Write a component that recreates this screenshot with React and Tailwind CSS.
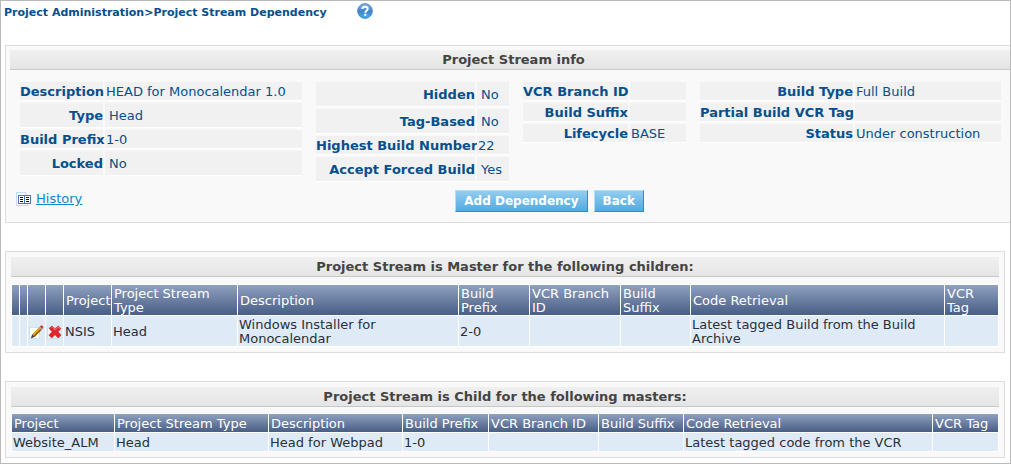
import React from "react";

const infoGroups = [
  {
    columns: "grid-cols-[84px_1fr]",
    items: [
      { label: "Description", value: "HEAD for Monocalendar 1.0" },
      { label: "Type", value: "Head", tall: true },
      { label: "Build Prefix", value: "1-0" },
      { label: "Locked", value: "No", tall: true },
    ],
  },
  {
    columns: "grid-cols-[160px_1fr]",
    items: [
      { label: "Hidden", value: "No", tall: true },
      { label: "Tag-Based", value: "No", tall: true },
      { label: "Highest Build Number", value: "22" },
      { label: "Accept Forced Build", value: "Yes", tall: true },
    ],
  },
  {
    columns: "grid-cols-[106px_1fr]",
    items: [
      { label: "VCR Branch ID", value: "" },
      { label: "Build Suffix", value: "" },
      { label: "Lifecycle", value: "BASE" },
    ],
  },
  {
    columns: "grid-cols-[154px_1fr]",
    items: [
      { label: "Build Type", value: "Full Build" },
      { label: "Partial Build VCR Tag", value: "" },
      { label: "Status", value: "Under construction" },
    ],
  },
];

const childColumns = [
  { label: "", width: "w-[7px]" },
  { label: "", width: "w-[7px]" },
  { label: "", width: "w-[17px]" },
  { label: "", width: "w-[17px]" },
  { label: "Project", width: "w-[47px]" },
  { label: "Project Stream Type", width: "w-[125px]" },
  { label: "Description", width: "w-[220px]" },
  { label: "Build Prefix", width: "w-[70px]" },
  { label: "VCR Branch ID", width: "w-[90px]" },
  { label: "Build Suffix", width: "w-[69px]" },
  { label: "Code Retrieval", width: "w-[253px]" },
  { label: "VCR Tag", width: "w-[53px]" },
];

const masterColumns = [
  { label: "Project", width: "w-[102px]" },
  { label: "Project Stream Type", width: "w-[153px]" },
  { label: "Description", width: "w-[133px]" },
  { label: "Build Prefix", width: "w-[85px]" },
  { label: "VCR Branch ID", width: "w-[109px]" },
  { label: "Build Suffix", width: "w-[84px]" },
  { label: "Code Retrieval", width: "w-[248px]" },
  { label: "VCR Tag", width: "w-[65px]" },
];

function HelpIcon() {
  return (
    <svg width="16" height="16" viewBox="0 0 16 16" aria-hidden="true">
      <defs>
        <linearGradient id="help" x1="0" y1="0" x2="0" y2="1">
          <stop offset="0" stopColor="#8fb4e3" />
          <stop offset="0.5" stopColor="#3f83c9" />
          <stop offset="1" stopColor="#45b4ea" />
        </linearGradient>
      </defs>
      <circle cx="8" cy="8" r="7.4" fill="url(#help)" stroke="#3f7dbd" strokeWidth="0.8" />
      <path
        d="M5.4 6.1C5.4 4.6 6.5 3.8 8 3.8s2.7.8 2.7 2.2c0 1.7-2.4 1.9-2.4 3.7"
        fill="none"
        stroke="#fff"
        strokeWidth="2"
      />
      <rect x="7.2" y="10.8" width="2.2" height="2" fill="#fff" />
    </svg>
  );
}

function HistoryIcon() {
  return (
    <svg width="16" height="15" viewBox="0 0 16 15" shapeRendering="crispEdges" aria-hidden="true">
      <path d="M0.5 0.5h8l3 3v10h-11z" fill="#fff" stroke="#c6def2" />
      <path d="M9 0v3h3" fill="none" stroke="#c6def2" />
      <rect x="2.5" y="3.5" width="12" height="8" fill="#fff" stroke="#4a76bd" />
      <path d="M8.5 3v9" stroke="#4a76bd" />
      <path d="M4 5.5h3M4 7.5h3M4 9.5h3M10 5.5h3M10 7.5h3M10 9.5h3" stroke="#111" />
    </svg>
  );
}

function EditIcon() {
  return (
    <svg width="15" height="15" viewBox="0 0 15 15" aria-hidden="true">
      <path d="M0.5 2.5h10v11h-10z" fill="#fff" stroke="#c6e2f3" />
      <path d="M3.2 9.2L10.4 2l2.6 2.6-7.2 7.2z" fill="#e3a01c" />
      <path d="M4.7 10.7L11.9 3.5l1.1 1.1-7.2 7.2z" fill="#8f5c10" />
      <path d="M9.8 2.6l1-1 2.6 2.6-1 1z" fill="#a7a7b8" />
      <path d="M10.8 1.6l1-1h1.3l1.1 1.1V3.1l-.9 1z" fill="#d9322e" />
      <path d="M3.2 9.2l2.6 2.6-4 1.6z" fill="#4b3b30" />
    </svg>
  );
}

function DeleteIcon() {
  return (
    <svg width="15" height="15" viewBox="0 0 15 15" aria-hidden="true">
      <path d="M0.5 2.5h10v11h-10z" fill="#fff" stroke="#c6e2f3" />
      <path
        d="M5 .9l3 3 3-3 2.9 2.7-2.9 3.2 3.1 3.4-2.9 2.8L8 9.7 4.7 13 1.8 10.2l3.3-3.4-3-3.2z"
        fill="#e2262b"
        stroke="#b9262b"
        strokeWidth="0.6"
      />
      <path d="M5 2.1l3 3 3-3 1.5 1.5" fill="none" stroke="#f47c7c" strokeWidth="0.9" />
    </svg>
  );
}

function PanelTitle({ children }) {
  return (
    <h2 className="h-5 border-b border-[#c8c8c8] bg-linear-to-b from-[#f0f0f0] to-[#e5e5e5] text-center text-[13px] leading-[19px] font-bold text-[#444]">
      {children}
    </h2>
  );
}

function InfoGroup({ columns, items }) {
  return (
    <dl className={`grid content-start gap-y-0.5 ${columns}`}>
      {items.map(({ label, value, tall }) => (
        <div key={label} className="col-span-2 grid grid-cols-subgrid gap-x-0.5">
          <dt
            className={`border-b border-white bg-[#f1f1f1] text-right font-bold whitespace-nowrap ${
              tall ? "h-[25px] leading-[26px]" : "h-[19px] leading-5"
            }`}
          >
            {label}
          </dt>
          <dd
            className={`border-b border-white bg-[#f1f1f1] whitespace-nowrap ${
              tall ? "h-[25px] pl-1 leading-[26px]" : "h-[19px] pl-px leading-5"
            }`}
          >
            {value}
          </dd>
        </div>
      ))}
    </dl>
  );
}

function DataTable({ label, columns, rows, rowHeight }) {
  return (
    <table
      aria-label={label}
      className="w-full table-fixed border-separate border-spacing-px bg-white text-[13px] leading-[14px]"
    >
      <colgroup>
        {columns.map((column, i) => (
          <col key={i} className={column.width} />
        ))}
      </colgroup>
      <thead>
        <tr>
          {columns.map((column, i) => (
            <th
              key={i}
              scope="col"
              className={`${rowHeight} bg-linear-to-b from-[#8fa1c0] to-[#495e85] p-0 pt-0.5 pl-0.5 text-left align-middle font-normal text-white`}
            >
              {column.label}
            </th>
          ))}
        </tr>
      </thead>
      <tbody>
        {rows.map((row, r) => (
          <tr key={r}>
            {row.map((cell, i) => (
              <td
                key={i}
                className={`${rowHeight} bg-[#deebf6] p-0 pt-0.5 pl-px align-middle text-[#2b2f3a]`}
              >
                {cell}
              </td>
            ))}
          </tr>
        ))}
      </tbody>
    </table>
  );
}

function ActionButton({ children }) {
  return (
    <button
      type="button"
      className="h-[22px] border border-t-[#a9e2fb] border-r-[#2a8fd0] border-b-[#2a8fd0] border-l-[#a9e2fb] bg-linear-to-b from-[#93cdf0] to-[#4fabe0] px-2 text-[12px] leading-5 font-bold text-white"
    >
      {children}
    </button>
  );
}

export default function App() {
  return (
    <main className="overflow-hidden border border-[#bababa] bg-white pb-[5px] pl-1 font-['Verdana','DejaVu_Sans',sans-serif] text-[13px] text-[#05508c]">
      <header className="-ml-px flex h-11 items-start gap-[30px] pt-0.5">
        <h1 className="text-[11px] leading-5 font-bold whitespace-nowrap">
          Project Administration&gt;Project Stream Dependency
        </h1>
        <button type="button" aria-label="Help">
          <HelpIcon />
        </button>
      </header>

      <section className="-mr-3 border border-[#dcdcdc] bg-[#f9f9f9] px-1 pt-1 pb-[10px]">
        <PanelTitle>Project Stream info</PanelTitle>
        <div className="grid grid-cols-[282fr_193fr_163fr_301fr] gap-x-3.5 pt-3 pr-4 pl-[10px]">
          {infoGroups.map((group) => (
            <InfoGroup key={group.columns} {...group} />
          ))}
        </div>
        <div className="flex items-start pt-2 pl-1.5">
          <a href="#history" className="flex items-center gap-1 text-[#0f86cc]">
            <HistoryIcon />
            <span className="leading-[18px] underline">History</span>
          </a>
          <div className="flex flex-1 justify-center gap-1.5">
            <ActionButton>Add Dependency</ActionButton>
            <ActionButton>Back</ActionButton>
          </div>
        </div>
      </section>

      <section className="mt-7 mr-[5px] border border-[#dcdcdc] bg-[#f9f9f9] p-[5px]">
        <PanelTitle>Project Stream is Master for the following children:</PanelTitle>
        <div className="pt-[7px]">
          <DataTable
            label="Children"
            columns={childColumns}
            rowHeight="h-[30px]"
            rows={[
              [
                "",
                "",
                <button key="edit" type="button" aria-label="Edit" className="block">
                  <EditIcon />
                </button>,
                <button key="delete" type="button" aria-label="Delete" className="block">
                  <DeleteIcon />
                </button>,
                "NSIS",
                "Head",
                "Windows Installer for Monocalendar",
                "2-0",
                "",
                "",
                "Latest tagged Build from the Build Archive",
                "",
              ],
            ]}
          />
        </div>
      </section>

      <section className="mt-7 mr-[5px] border border-[#dcdcdc] bg-[#f9f9f9] p-[5px]">
        <PanelTitle>Project Stream is Child for the following masters:</PanelTitle>
        <div className="pt-1.5">
          <DataTable
            label="Masters"
            columns={masterColumns}
            rowHeight="h-[18px]"
            rows={[["Website_ALM", "Head", "Head for Webpad", "1-0", "", "", "Latest tagged code from the VCR", ""]]}
          />
        </div>
      </section>
    </main>
  );
}
